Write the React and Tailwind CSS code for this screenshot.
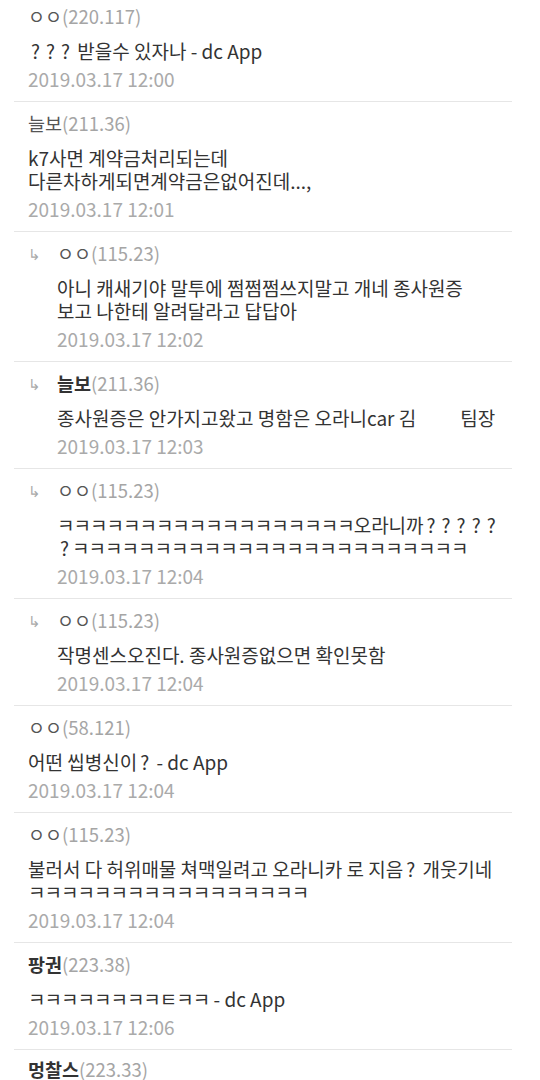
const comments = [
  { name: 'ㅇㅇ', ip: '(220.117)', lines: ['??? 받을수 있자나 - dc App'], date: '2019.03.17 12:00', first: true },
  { name: '늘보', ip: '(211.36)', lines: ['k7사면 계약금처리되는데', '다른차하게되면계약금은없어진데...,'], date: '2019.03.17 12:01' },
  { name: 'ㅇㅇ', ip: '(115.23)', reply: true, lines: ['아니 캐새기야 말투에 쩜쩜쩜쓰지말고 개네 종사원증', '보고 나한테 알려달라고 답답아'], date: '2019.03.17 12:02' },
  { name: '늘보', ip: '(211.36)', reply: true, bold: true, lines: ['GAP'], date: '2019.03.17 12:03' },
  { name: 'ㅇㅇ', ip: '(115.23)', reply: true, lines: ['ㅋㅋㅋㅋㅋㅋㅋㅋㅋㅋㅋㅋㅋㅋㅋㅋㅋㅋ오라니까?????', '?ㅋㅋㅋㅋㅋㅋㅋㅋㅋㅋㅋㅋㅋㅋㅋㅋㅋㅋㅋㅋㅋㅋㅋㅋ'], date: '2019.03.17 12:04' },
  { name: 'ㅇㅇ', ip: '(115.23)', reply: true, lines: ['작명센스오진다. 종사원증없으면 확인못함'], date: '2019.03.17 12:04' },
  { name: 'ㅇㅇ', ip: '(58.121)', lines: ['어떤 씹병신이? - dc App'], date: '2019.03.17 12:04' },
  { name: 'ㅇㅇ', ip: '(115.23)', lines: ['불러서 다 허위매물 쳐맥일려고 오라니카 로 지음? 개웃기네', 'ㅋㅋㅋㅋㅋㅋㅋㅋㅋㅋㅋㅋㅋㅋㅋㅋㅋ'], date: '2019.03.17 12:04' },
  { name: '팡권', ip: '(223.38)', bold: true, lines: ['ㅋㅋㅋㅋㅋㅋㅋㅋㅌㅋㅋ - dc App'], date: '2019.03.17 12:06' },
]

// the app's font draws "?" wide and "ㅋ" a bit narrow
function Line({ text }) {
  const parts = text.split(/(\?|[ㅋㅌ]+)/).filter(Boolean)
  return (
    <div className="whitespace-nowrap">
      {parts.map((p, i) =>
        p === '?' ? (
          <span key={i} className="px-[3px]">?</span>
        ) : /^[ㅋㅌ]+$/.test(p) ? (
          <span key={i} className="tracking-[-1px]">{p}</span>
        ) : (
          <span key={i}>{p}</span>
        )
      )}
    </div>
  )
}

function Comment({ c }) {
  const indent = c.reply ? 'pl-[43px]' : 'pl-[14px]'
  return (
    <div className={`border-b border-[#e6e6e6] pb-[11px] ${c.first ? 'pt-[5px]' : 'pt-[10px]'}`}>
      <div className="flex items-center h-[24px] pl-[14px] text-[18.5px]">
        {c.reply && <span className="w-[29px] text-[15px] text-[#aaa]">↳</span>}
        <span className={c.bold ? 'text-[#333] font-semibold' : 'text-[#555]'}>{c.name}</span>
        <span className="text-[#a5a5a5]">{c.ip}</span>
      </div>
      <div className={`mt-[10px] text-[19px] leading-[23px] text-[#333] ${indent}`}>
        {c.lines.map((l, i) =>
          l === 'GAP' ? (
            <div key={i} className="whitespace-nowrap">
              종사원증은 안가지고왔고 명함은 오라니car 김<span className="ml-[44px]">팀장</span>
            </div>
          ) : (
            <Line key={i} text={l} />
          )
        )}
      </div>
      <div className={`mt-[6px] text-[19px] leading-[22px] text-[#aaa] ${indent}`}>{c.date}</div>
    </div>
  )
}

export default function App() {
  return (
    <div className="min-h-screen bg-white" style={{ fontFamily: '"Noto Sans CJK KR", "Noto Sans", sans-serif' }}>
      <div className="mx-[14px] w-[498px] overflow-hidden">
        {comments.map((c, i) => <Comment key={i} c={c} />)}
        <div className="pt-[8px] pl-[14px] flex items-center h-[32px] text-[18.5px]">
          <span className="text-[#333] font-semibold">멍찰스</span>
          <span className="text-[#a5a5a5]">(223.33)</span>
        </div>
      </div>
    </div>
  )
}
